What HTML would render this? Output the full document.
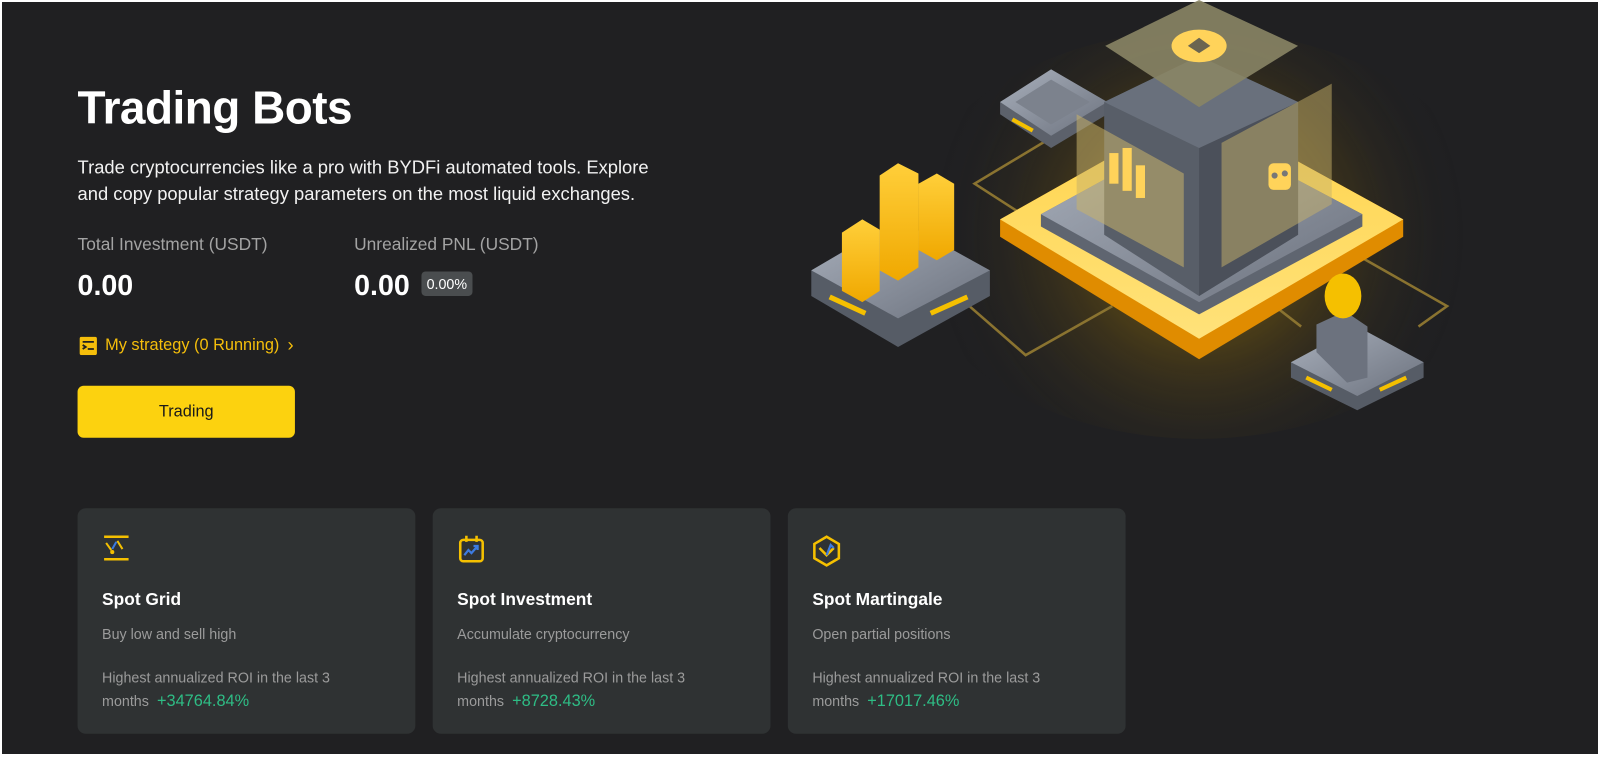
<!DOCTYPE html>
<html><head><meta charset="utf-8"><style>
*{margin:0;padding:0;box-sizing:border-box}
html,body{width:1600px;height:757px;background:#fff;overflow:hidden;font-family:"Liberation Sans",sans-serif}
.bg{position:absolute;left:2px;top:2px;width:1596px;height:752px;background:#202022}
.wrap{position:absolute;left:0;top:0;width:1568px;height:742px;transform:scale(1.0205);transform-origin:0 0}
.abs{position:absolute}
h1{position:absolute;left:76px;top:80px;font-size:45px;font-weight:bold;color:#fff;letter-spacing:-0.5px}
.p{left:76px;top:151px;font-size:18px;line-height:26px;color:#f2f2f2;width:590px}
.lbl{font-size:17px;color:#a3a3a3;top:230px}
.val{font-size:28px;font-weight:bold;color:#fff;top:264px}
.badge{left:413px;top:266px;background:#4a4d4f;color:#fff;font-size:14px;padding:4px 5px;border-radius:4px}
.strat{left:78px;top:328px;font-size:16px;color:#f5be0b;display:flex;align-items:center;gap:8px}
.btn{left:76px;top:378px;width:213px;height:51px;background:#fcd20f;border-radius:6px;color:#1a1a1a;font-size:16px;display:flex;align-items:center;justify-content:center}
.card{position:absolute;top:498px;width:331px;height:221px;background:#2f3233;border-radius:8px}
.card .ic{position:absolute;left:24px;top:26px}
.t{position:absolute;left:24px;top:80px;font-size:17px;font-weight:bold;color:#fff}
.d{position:absolute;left:24px;top:115px;font-size:14px;color:#9b9b9b}
.r{position:absolute;left:24px;top:155px;font-size:14px;color:#9b9b9b;line-height:23px}
.r b{font-weight:normal;color:#2ebd85;font-size:16px;margin-left:4px}
</style></head><body>
<div class="bg"></div>
<div class="wrap">
<svg class="abs" style="left:0;top:0" width="1568" height="742" viewBox="0 0 1568 742">
<defs>
<radialGradient id="gl" cx="1175" cy="230" r="260" gradientUnits="userSpaceOnUse">
<stop offset="0" stop-color="#f5c000" stop-opacity=".55"/><stop offset=".5" stop-color="#b08000" stop-opacity=".2"/><stop offset="1" stop-color="#202022" stop-opacity="0"/></radialGradient>
<linearGradient id="gy" x1="0" y1="0" x2="0" y2="1"><stop offset="0" stop-color="#ffd34a"/><stop offset="1" stop-color="#ffe27a"/></linearGradient>
<linearGradient id="gg" x1="0" y1="0" x2="1" y2="1"><stop offset="0" stop-color="#a9b0bc"/><stop offset="1" stop-color="#6c727e"/></linearGradient>
<linearGradient id="bar" x1="0" y1="0" x2="0" y2="1"><stop offset="0" stop-color="#ffcf3a"/><stop offset="1" stop-color="#f0a800"/></linearGradient>
</defs>
<ellipse cx="1175" cy="230" rx="290" ry="200" fill="url(#gl)"/>
<g fill="none" stroke="#8a7330" stroke-width="2.5">
<path d="M1030 135 L955 180 L1025 225"/>
<path d="M950 300 L1005 348 L1090 300"/>
<path d="M1330 250 L1418 300 L1390 320"/>
<path d="M1275 320 L1230 285"/>
</g>
<path d="M980 100 L1030 68 L1085 100 L1085 112 L1030 145 L980 112Z" fill="#5c616b"/>
<path d="M980 100 L1030 68 L1085 100 L1030 133Z" fill="url(#gg)"/>
<path d="M995 100 L1030 78 L1068 100 L1030 122Z" fill="#7c828d"/>
<path d="M992 117 L1012 128" stroke="#f5c000" stroke-width="4"/>
<path d="M980 215 L1175 105 L1375 215 L1375 232 L1175 352 L980 232Z" fill="#e08c00"/>
<path d="M980 215 L1175 105 L1375 215 L1175 332Z" fill="url(#gy)"/>
<path d="M1020 210 L1175 125 L1335 210 L1335 222 L1175 308 L1020 222Z" fill="#5f6570"/>
<path d="M1020 210 L1175 125 L1335 210 L1175 296Z" fill="url(#gg)"/>
<path d="M1082 100 L1175 55 L1272 100 L1272 230 L1175 290 L1082 230Z" fill="#585e68"/>
<path d="M1175 145 L1272 100 L1272 230 L1175 290Z" fill="#4b505a"/>
<path d="M1082 100 L1175 55 L1272 100 L1175 145Z" fill="#69707c"/>
<path d="M1055 112 L1160 170 L1160 262 L1055 205Z" fill="#c8b26a" opacity=".55"/>
<path d="M1197 140 L1305 82 L1305 200 L1197 262Z" fill="#c8b26a" opacity=".5"/>
<g fill="#ffd35a"><rect x="1087" y="150" width="9" height="30"/><rect x="1100" y="145" width="9" height="42"/><rect x="1113" y="162" width="9" height="32"/></g>
<rect x="1243" y="160" width="22" height="26" rx="5" fill="#ffd35a"/><circle cx="1249" cy="172" r="3" fill="#777"/><circle cx="1259" cy="170" r="3" fill="#777"/>
<path d="M1083 45 L1175 0 L1272 45 L1175 105Z" fill="#8a8565" opacity=".9"/>
<ellipse cx="1175" cy="45" rx="27" ry="16" fill="#ffd35a"/>
<path d="M1175 37 L1186 45 L1175 52 L1164 45Z" fill="#6b6550"/>
<path d="M795 265 L880 215 L970 265 L970 290 L880 340 L795 290Z" fill="#565c66"/>
<path d="M795 265 L880 215 L970 265 L880 312Z" fill="url(#gg)"/>
<path d="M813 291 L848 307 M912 307 L948 291" stroke="#f5c000" stroke-width="5"/>
<path d="M825 228 L845 215 L862 225 L862 285 L845 296 L825 285Z" fill="url(#bar)"/>
<path d="M862 172 L880 160 L900 170 L900 262 L880 275 L862 265Z" fill="url(#bar)"/>
<path d="M900 180 L918 170 L935 180 L935 245 L918 255 L900 245Z" fill="url(#bar)"/>
<path d="M1265 355 L1330 320 L1395 355 L1395 370 L1330 402 L1265 370Z" fill="#565c66"/>
<path d="M1265 355 L1330 320 L1395 355 L1330 388Z" fill="url(#gg)"/>
<path d="M1280 370 L1305 382 M1352 382 L1378 370" stroke="#f5c000" stroke-width="4"/>
<path d="M1290 318 L1318 305 L1340 320 L1340 370 L1320 375 L1290 345Z" fill="#6c727e"/>
<ellipse cx="1316" cy="290" rx="18" ry="22" fill="#f5c000"/>
</svg>
<h1>Trading Bots</h1>
<div class="abs p">Trade cryptocurrencies like a pro with BYDFi automated tools. Explore and copy popular strategy parameters on the most liquid exchanges.</div>
<div class="abs lbl" style="left:76px">Total Investment (USDT)</div>
<div class="abs lbl" style="left:347px">Unrealized PNL (USDT)</div>
<div class="abs val" style="left:76px">0.00</div>
<div class="abs val" style="left:347px">0.00</div>
<div class="abs badge">0.00%</div>
<div class="abs strat"><svg width="17" height="18" viewBox="0 0 17 18"><rect x="0" y="0" width="17" height="18" rx="2" fill="#f5be0b"/><path d="M3 5 H14 M3 8 L6 10 L3 12 M8 12 H14" stroke="#202022" stroke-width="1.8" fill="none"/></svg>My strategy (0 Running) <span style="font-size:18px">›</span></div>
<div class="abs btn">Trading</div>

<div class="card" style="left:76px">
<svg class="ic" width="28" height="26" viewBox="0 0 28 26"><path d="M2 2 H26 M2 24 H26" stroke="#f5c000" stroke-width="2.5"/><path d="M4 8 L9 15 M15 6 L20 14" stroke="#f5c000" stroke-width="2"/><path d="M10 14 L14 7" stroke="#3d7be0" stroke-width="2"/><circle cx="10" cy="17" r="2" fill="#f5c000"/></svg>
<div class="t">Spot Grid</div><div class="d">Buy low and sell high</div>
<div class="r">Highest annualized ROI in the last 3<br>months <b>+34764.84%</b></div></div>
<div class="card" style="left:424px">
<svg class="ic" width="28" height="28" viewBox="0 0 28 28"><rect x="3" y="5" width="22" height="21" rx="3" fill="none" stroke="#f5c000" stroke-width="2.5"/><path d="M9 1 V7 M19 1 V7" stroke="#f5c000" stroke-width="2.5"/><path d="M7 20 L11 15 L14 18 L20 11 M16 11 H20 V15" stroke="#3d7be0" stroke-width="2.2" fill="none"/></svg>
<div class="t">Spot Investment</div><div class="d">Accumulate cryptocurrency</div>
<div class="r">Highest annualized ROI in the last 3<br>months <b>+8728.43%</b></div></div>
<div class="card" style="left:772px">
<svg class="ic" width="28" height="32" viewBox="0 0 28 32"><path d="M14 2 L26 9 V23 L14 30 L2 23 V9Z" fill="none" stroke="#f5c000" stroke-width="2.5"/><path d="M7 13 L14 20 L21 13" stroke="#f5c000" stroke-width="2.5" fill="none"/><path d="M14 20 L18 10 L21 13" stroke="#3d7be0" stroke-width="2.2" fill="none"/></svg>
<div class="t">Spot Martingale</div><div class="d">Open partial positions</div>
<div class="r">Highest annualized ROI in the last 3<br>months <b>+17017.46%</b></div></div>
</div>
</body></html>
